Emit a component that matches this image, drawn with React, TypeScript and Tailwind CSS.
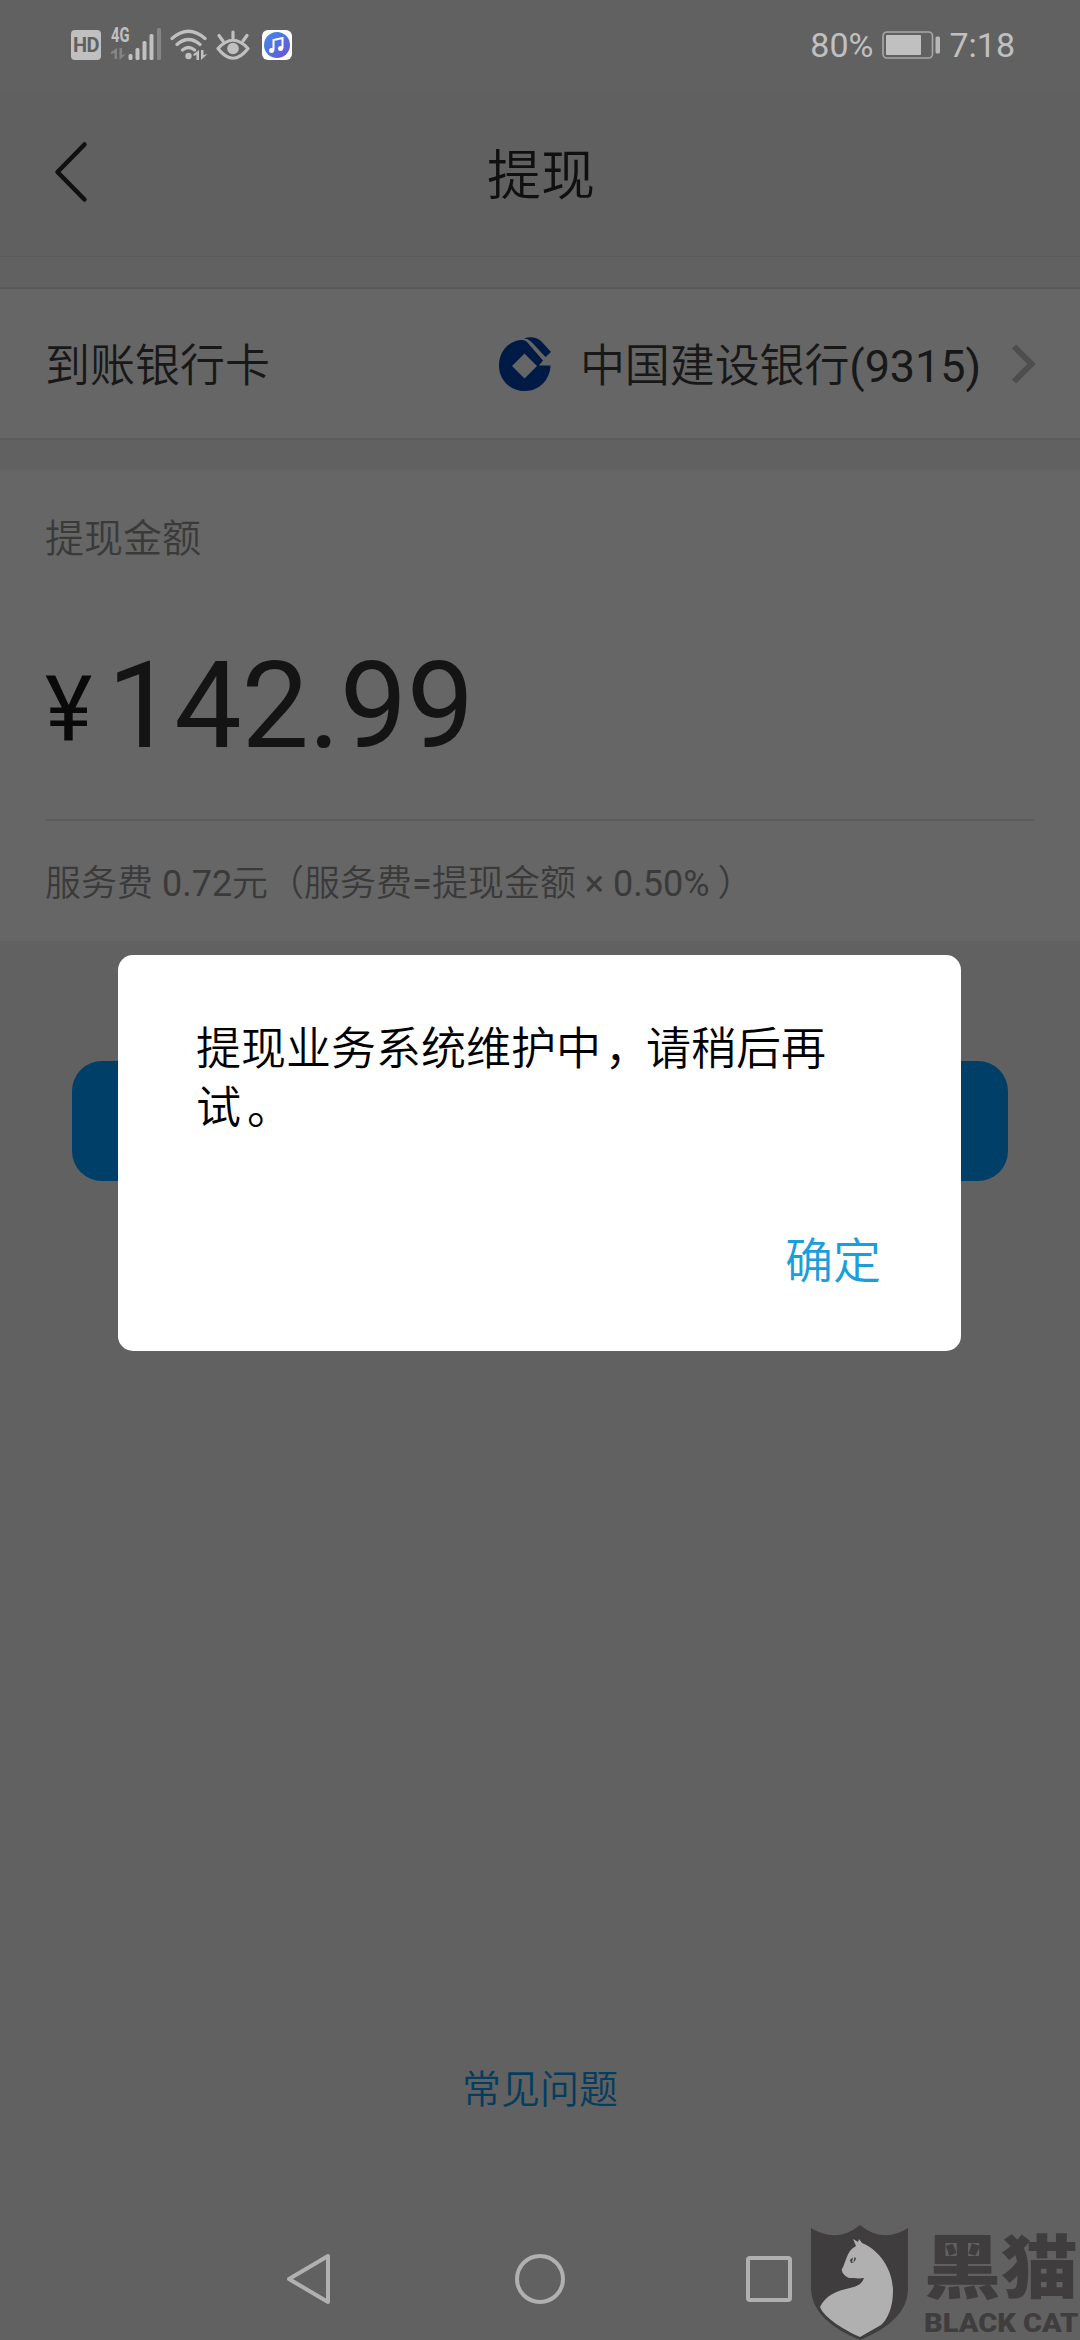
import React from 'react';

interface IconProps {
  className?: string;
}

const SignalIcon: React.FC<IconProps> = ({ className }) => (
  <svg className={className} viewBox="0 0 50 34" fill="#c0c0c0">
    <g fill="#858585">
      <path d="M6 20v11H3.500v-6L0 26v-2zM8.500 20H11v7l4-1-6.500 6z" />
      <rect x="46" y="0" width="4" height="32" rx="1.500" />
    </g>
    <rect x="17.500" y="26" width="4" height="6" rx="1.500" />
    <rect x="24.500" y="20" width="4" height="12" rx="1.500" />
    <rect x="31.500" y="13" width="4" height="19" rx="1.500" />
    <rect x="38.500" y="6" width="4" height="26" rx="1.500" />
  </svg>
);

const WifiIcon: React.FC<IconProps> = ({ className }) => (
  <svg className={className} viewBox="0 0 38 32" fill="none" stroke="#c0c0c0" strokeWidth="3.200" strokeLinecap="round">
    <path d="M2 9.500Q18.500-5 35 9.500M7 15.500Q18.500 5.500 30 15.500M12.500 21Q18.500 16 24.500 21" />
    <circle cx="18.500" cy="27" r="3.200" fill="#c0c0c0" stroke="none" />
    <path d="M29 21v10h-2.500v-5l-3 1v-2zM31 21h2.500v5l4-1-6.500 6z" fill="#c0c0c0" stroke="none" />
  </svg>
);

const EyeIcon: React.FC<IconProps> = ({ className }) => (
  <svg className={className} viewBox="0 0 34 31" fill="none" stroke="#c0c0c0" strokeWidth="3.200" strokeLinecap="round">
    <path d="M2 18.500Q17 2 32 18.500Q17 38 2 18.500Z" strokeLinejoin="round" />
    <path d="M17 2v6M3 5.500l4 5.500M31 5.500l-4 5.500" />
    <circle cx="17" cy="18.500" r="5.800" fill="#c0c0c0" stroke="none" />
  </svg>
);

const MusicIcon: React.FC<IconProps> = ({ className }) => (
  <svg className={className} viewBox="0 0 30 30">
    <defs>
      <linearGradient id="music" x1="0" y1="0" x2="1" y2="1">
        <stop offset="0" stopColor="#3f8be8" />
        <stop offset="1" stopColor="#6a55d4" />
      </linearGradient>
    </defs>
    <rect width="30" height="30" rx="6" fill="#fff" />
    <circle cx="15" cy="15" r="13" fill="url(#music)" />
    <path d="M11.500 20.500V10l9-2v10.500" fill="none" stroke="#fff" strokeWidth="2" />
    <circle cx="9.500" cy="20.500" r="2.500" fill="#fff" />
    <circle cx="18.500" cy="18.500" r="2.500" fill="#fff" />
  </svg>
);

const BatteryIcon: React.FC<IconProps> = ({ className }) => (
  <svg className={className} viewBox="0 0 58 28">
    <rect x="1" y="1" width="49.500" height="26" rx="4" fill="none" stroke="#a8a8a8" strokeWidth="1.600" />
    <rect x="4" y="4" width="35" height="20" rx="1" fill="#c0c0c0" />
    <rect x="53.500" y="5.500" width="4.500" height="17" rx="1.500" fill="#b8b8b8" />
  </svg>
);

const BankLogo: React.FC<IconProps> = ({ className }) => (
  <svg className={className} viewBox="0 0 52 54">
    <path
      fill="#001a46"
      fillRule="evenodd"
      d="M22 3C9 4 0 15 0 28.500 0 43 11 54 26 54c14 0 25-11 25.500-25.500H40l4-5L28 5Q25.500 2.500 22 3zM25.500 16.500 38 29 25.500 41.500 13 29z"
    />
    <path fill="#001a46" d="M25 1.500C31-1 38 0 42 4l10 11L46.500 20 32 4.500Q29 1.500 25 1.500z" />
  </svg>
);

const CatShield: React.FC<IconProps> = ({ className }) => (
  <svg className={className} viewBox="0 0 98 115">
    <path fill="#403d3e" d="M0 3Q26 19 49 0Q72 19 97 3V65Q96 96 49 115Q2 96 0 65Z" />
    <path
      fill="#b0b0b0"
      d="M42 14l5 3 1-3 3 4C70 26 82 46 82 66c0 17-6 29-12 34L49 112C35 106 13 93 9 82c6-12 16-16 30-19 8-2 12-4 14-10-5 1-11 0-15 0-3-1-8-5-7-9 4-6 4-18 14-23z"
    />
    <path fill="#403d3e" d="M39 35q3-4 6-2-1 5-5 5z" />
    <path fill="#b0b0b0" d="M42 32h1.500l-1 5H41z" />
  </svg>
);

const StatusBar: React.FC = () => (
  <div className="flex h-[90px] items-center pl-[71px] pr-[65px] text-[#c0c0c0]">
    <div className="flex h-[30px] w-[30px] items-center justify-center rounded-[4px] bg-[#c0c0c0] text-[20px] font-bold leading-none tracking-[-0.5px] text-[#606060]">
      HD
    </div>
    <div className="relative ml-[10px] h-[34px] w-[50px]">
      <SignalIcon className="h-[34px] w-[50px]" />
      <span className="absolute left-0 top-[-3px] origin-left scale-x-[.7] text-[21px] font-bold leading-none">4G</span>
    </div>
    <WifiIcon className="ml-[9px] h-[32px] w-[38px]" />
    <EyeIcon className="ml-[8px] h-[31px] w-[34px]" />
    <MusicIcon className="ml-[12px] h-[30px] w-[30px]" />
    <span className="ml-auto text-[34px]">80%</span>
    <BatteryIcon className="ml-[9px] h-[28px] w-[58px]" />
    <span className="ml-[9px] text-[34px]">7:18</span>
  </div>
);

const NavigationBar: React.FC = () => (
  <div className="flex h-[122px] items-center pl-[286px]">
    <svg className="h-[52px] w-[45px]" viewBox="0 0 45 52" fill="none" stroke="#b0b0b0" strokeWidth="4" strokeLinejoin="round">
      <path d="M3 26 42 3V49Z" />
    </svg>
    <div className="ml-[184px] h-[50px] w-[50px] rounded-full border-4 border-[#b0b0b0]"></div>
    <div className="ml-[181px] h-[46px] w-[46px] rounded-[4px] border-4 border-[#b0b0b0]"></div>
  </div>
);

const Watermark: React.FC = () => (
  <div className="absolute left-[811px] top-[2225px] flex font-['Roboto','Noto_Sans_CJK_SC',sans-serif] text-[#403d3e]">
    <CatShield className="h-[115px] w-[98px]" />
    <div className="ml-[15px] w-[156px]">
      <div className="mt-[8px] origin-center scale-y-[.9] whitespace-nowrap text-[77px] font-black leading-[74px]">黑猫</div>
      <div className="mt-[5px] origin-left scale-x-[1.16] whitespace-nowrap text-[25px] font-black leading-[24px]">BLACK CAT</div>
    </div>
  </div>
);

const MessageDialog: React.FC = () => (
  <div className="absolute left-[118px] top-[955px] flex h-[396px] w-[843px] flex-col rounded-[15px] bg-white pl-[78px] pt-[65px]">
    <p className="w-[640px] text-[45px] leading-[59px] text-black">
      提现业务系统维护中<span className="ml-[4px] mr-[-4px]">，</span>请稍后再试<span className="ml-[6px]">。</span>
    </p>
    <button className="ml-auto mr-[80px] mt-[89px] text-[48px] leading-[70px] text-[#1c9edb]">确定</button>
  </div>
);

export default function App() {
  return (
    <div className="relative flex h-[2340px] w-[1080px] flex-col overflow-hidden bg-[#616161] font-['Roboto','Noto_Sans_CJK_SC_DemiLight','Noto_Sans_CJK_SC',sans-serif] font-normal">
      <StatusBar />

      {/* Title bar */}
      <header className="flex h-[167px] items-center border-b border-[#595959] bg-[#606060] pl-[53px] pb-[2px]">
        <svg className="h-[62px] w-[36px]" viewBox="0 0 36 62" fill="none" stroke="#101010" strokeWidth="4.500" strokeLinecap="round" strokeLinejoin="round">
          <path d="M31.500 3.500 4.500 31 31.500 58.500" />
        </svg>
        <h1 className="ml-[398px] pt-[9px] text-[54px] leading-none text-[#101010]">提现</h1>
      </header>

      {/* Bank card row */}
      <div className="mt-[30px] flex h-[153px] items-center border-y-2 border-[#5b5b5b] bg-[#666] pl-[45px] pr-[43px] text-[45px] leading-none text-[#181818]">
        <span className="pt-[5px]">到账银行卡</span>
        <BankLogo className="ml-auto h-[54px] w-[52px]" />
        <span className="ml-[29px] pt-[5px] tracking-[-0.1px]">中国建设银行(9315)</span>
        <svg className="ml-[30px] h-[42px] w-[26px]" viewBox="0 0 26 42" fill="none" stroke="#4e4e4e" strokeWidth="6">
          <path d="M3 3.500 20.500 21 3 38.500" />
        </svg>
      </div>

      {/* Amount */}
      <section className="mt-[30px] h-[471px] bg-[#666] px-[45px] pt-[46px]">
        <div className="text-[39px] leading-[46px] text-[#3a3a3a]">提现金额</div>
        <div className="flex h-[259px] items-start border-b-2 border-[#5d5d5d] pt-[84px] text-[#141414]">
          <span className="mt-[14px] text-[90px] leading-[100px] text-[#090909]">¥</span>
          <span className="ml-[15px] text-[120px] leading-[120px] tracking-[-0.4px]">142.99</span>
        </div>
        <div className="pt-[38px] text-[36px] leading-[50px] text-[#3a3a3a]">
          服务费 0.72元（服务费=提现金额 × 0.50%<span className="ml-[8px]">）</span>
        </div>
      </section>

      <div className="mx-[72px] mt-[120px] h-[120px] rounded-[30px] bg-[#003f67]"></div>

      <a className="mb-[99px] mt-auto text-center text-[39px] leading-[58px] text-[#053d5e]">常见问题</a>
      <NavigationBar />

      <MessageDialog />
      <Watermark />
    </div>
  );
}
